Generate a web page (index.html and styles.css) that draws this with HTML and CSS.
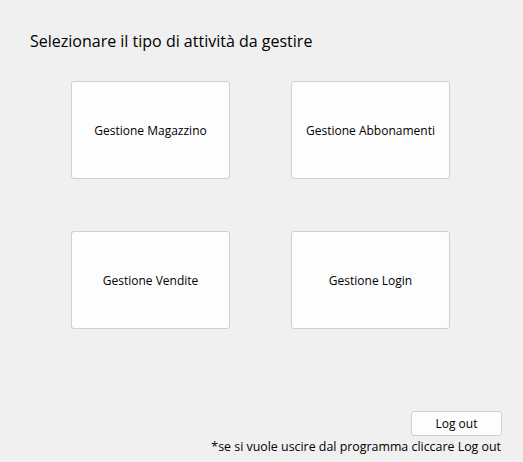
FILE: index.html
```html
<!DOCTYPE html>
<html lang="it">
<head>
<meta charset="utf-8">
<link rel="stylesheet" href="styles.css">
</head>
<body>
<div class="window">
  <h1 class="title">Selezionare il tipo di attività da gestire</h1>
  <div class="grid">
    <button class="tile">Gestione Magazzino</button>
    <button class="tile">Gestione Abbonamenti</button>
    <button class="tile">Gestione Vendite</button>
    <button class="tile">Gestione Login</button>
  </div>
  <div class="footer">
    <button class="logout">Log out</button>
    <p class="note">*se si vuole uscire dal programma cliccare Log out</p>
  </div>
</div>
</body>
</html>
```
FILE: styles.css
```css
html, body {
  margin: 0;
  padding: 0;
  background: #f0f0f0;
}
.window {
  width: 523px;
  height: 462px;
  display: flex;
  flex-direction: column;
  font-family: "Open Sans", "Noto Sans", sans-serif;
  color: #000;
  box-sizing: border-box;
}
.title {
  margin: 30px 0 0 30px;
  font-size: 16px;
  font-weight: 400;
  line-height: 22px;
}
.grid {
  display: grid;
  grid-template-columns: 159px 159px;
  grid-auto-rows: 98px;
  column-gap: 61px;
  row-gap: 52px;
  margin: 29px 0 0 71px;
}
.tile, .logout {
  background: #fdfdfd;
  border: 1px solid #d0d0d0;
  border-radius: 3px;
  font-family: inherit;
  font-size: 12px;
  color: #000;
  padding: 0;
}
.footer {
  margin-top: auto;
  display: flex;
  flex-direction: column;
  align-items: flex-end;
  padding: 0 21px 7px 0;
}
.logout {
  width: 91px;
  height: 25px;
}
.note {
  margin: 3px 1px 0 0;
  font-size: 12.4px;
  line-height: 16px;
}
```
